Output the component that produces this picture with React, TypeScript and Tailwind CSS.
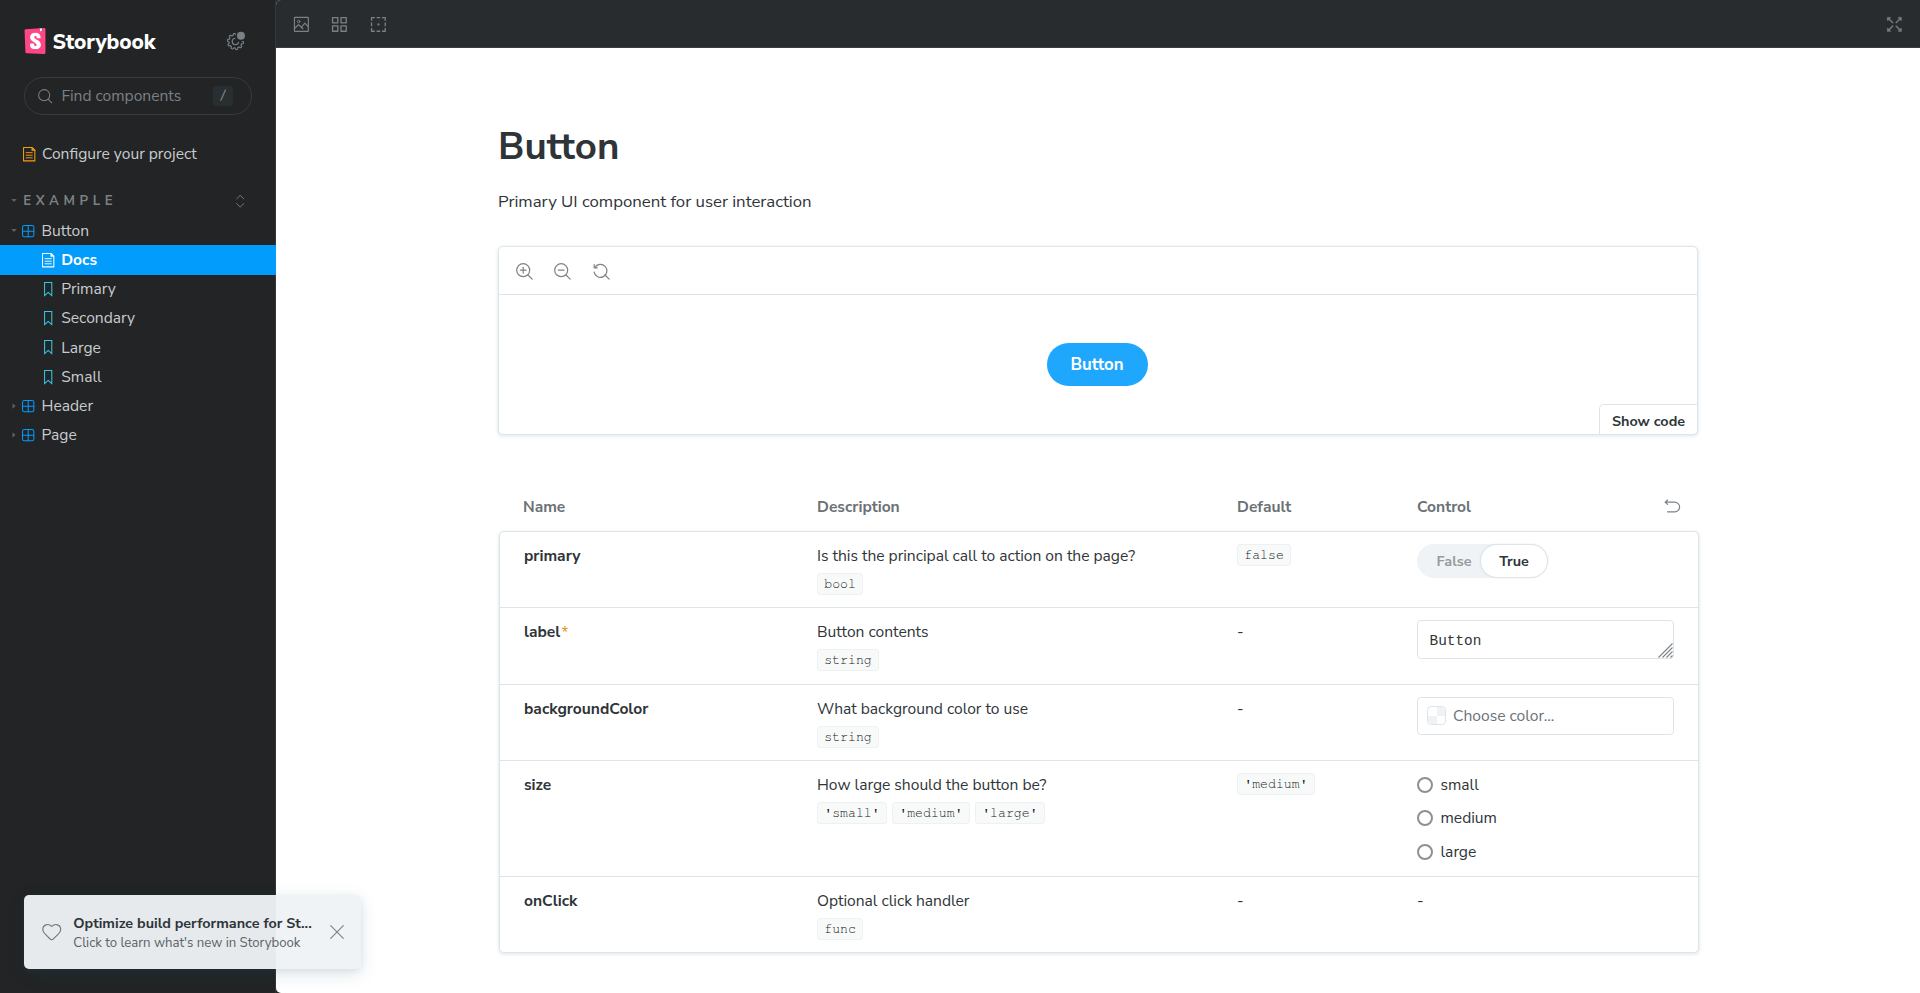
import type { ReactNode } from "react";
import { Heart } from "lucide-react";
import { SiStorybook } from "react-icons/si";

const SANS = "font-['Nunito_Sans','Lato',sans-serif]";
const CODE = "font-['FreeMono','Liberation_Mono',monospace]";

function Icon({ className = "", children }: { className?: string; children: ReactNode }) {
  return (
    <svg
      viewBox="0 0 14 14"
      fill="none"
      stroke="currentColor"
      strokeLinecap="round"
      strokeLinejoin="round"
      className={`shrink-0 overflow-visible ${className}`}
    >
      {children}
    </svg>
  );
}

const DocumentIcon = ({ className }: { className: string }) => (
  <Icon className={className}>
    <path d="M1.5 .5H10L12.5 3V13.5H1.5Z" />
    <path d="M9.5 .5V3.5H12.5Z" fill="currentColor" strokeWidth=".5" />
    <path d="M4 5.5H10M4 8H10M4 10.5H10" strokeWidth=".9" />
  </Icon>
);

const ComponentIcon = () => (
  <Icon className="size-[14.4px] text-[#029cfd]">
    <rect x="1.5" y="1.5" width="11" height="11" rx="1.8" />
    <path d="M7 1.5V12.5M1.5 7H12.5" />
  </Icon>
);

const BookmarkIcon = () => (
  <Icon className="size-[14.4px] text-[#37c9e6]">
    <path d="M3.5 .5H10.5V13.3L7 10.2L3.5 13.3Z" strokeLinejoin="miter" />
  </Icon>
);

const gear = (() => {
  const points: string[] = [];
  for (let i = 0; i <= 200; i++) {
    const a = (i / 200) * Math.PI * 2;
    const wave = Math.max(-0.6, Math.min(0.6, Math.sin(a * 10)));
    const r = 6 + wave * 1.1;
    points.push(`${(7 + r * Math.cos(a)).toFixed(2)} ${(7 + r * Math.sin(a)).toFixed(2)}`);
  }
  return `M${points.join("L")}Z`;
})();

const CogIcon = () => (
  <Icon className="size-[17px] text-[#798186]">
    <mask id="cog-badge" maskUnits="userSpaceOnUse" x="-2" y="-2" width="18" height="18">
      <rect x="-2" y="-2" width="18" height="18" fill="white" stroke="none" />
      <circle cx="11.5" cy="2.3" r="4.4" fill="black" stroke="none" />
    </mask>
    <g mask="url(#cog-badge)">
      <path d={gear} strokeWidth=".95" />
      <path d="M6.6 4.3A2.7 2.7 0 1 0 9.6 7.6" strokeWidth=".95" />
    </g>
    <circle cx="11.5" cy="2.3" r="3.3" fill="currentColor" stroke="none" />
  </Icon>
);

const PhotoIcon = () => (
  <Icon className="size-[16.8px]">
    <rect x="1.2" y="1.2" width="11.6" height="11.6" rx=".4" />
    <circle cx="4.7" cy="4.6" r="1.1" strokeWidth=".8" />
    <path d="M1.5 10.2L4.6 7.2L6.9 9.4L9.9 6L12.6 8.9M6.9 9.4L8.2 10.6" />
  </Icon>
);

const GridIcon = () => (
  <Icon className="size-[16.8px]">
    <path
      d="M1.3 1.3H5.7V5.7H1.3ZM8.3 1.3H12.7V5.7H8.3ZM1.3 8.3H5.7V12.7H1.3ZM8.3 8.3H12.7V12.7H8.3Z"
      strokeWidth="1.1"
    />
  </Icon>
);

const OutlineIcon = () => (
  <Icon className="size-[16.8px]">
    <path
      d="M1.3 4V1.3H4M5.5 1.3H8.5M10 1.3H12.7V4M12.7 5.5V8.5M12.7 10V12.7H10M8.5 12.7H5.5M4 12.7H1.3V10M1.3 8.5V5.5"
      strokeWidth="1.1"
      strokeLinecap="butt"
    />
    <circle cx="7" cy="7" r=".9" fill="currentColor" stroke="none" />
  </Icon>
);

const expandCorner =
  "M1.5 1h2a.5.5 0 010 1h-.793l3.147 3.146a.5.5 0 11-.708.708L2 2.707V3.5a.5.5 0 01-1 0v-2a.5.5 0 01.5-.5z";

const ExpandIcon = () => (
  <Icon className="size-[16.8px]">
    <g fill="currentColor" strokeWidth=".2">
      <path d={expandCorner} />
      <path d={expandCorner} transform="translate(14 0) scale(-1 1)" />
      <path d={expandCorner} transform="translate(0 14) scale(1 -1)" />
      <path d={expandCorner} transform="translate(14 14) scale(-1 -1)" />
    </g>
  </Icon>
);

function ZoomIcon({ kind }: { kind: "in" | "out" | "reset" }) {
  return (
    <Icon className="size-[16.8px]">
      {kind === "reset" ? (
        <path d="M1 1.4V4H3.6M1.5 3.9A5.4 5.4 0 1 1 .9 7.6" />
      ) : (
        <circle cx="6" cy="6" r="5.4" />
      )}
      <path d="M10 10L13.5 13.5" />
      {kind !== "reset" && <path d="M3.6 6H8.4" />}
      {kind === "in" && <path d="M6 3.6V8.4" />}
    </Icon>
  );
}

function Caret({ open }: { open: boolean }) {
  return (
    <svg viewBox="0 0 6 6" className="size-[6px] shrink-0 fill-[#5b6063]">
      <path d={open ? "M.2 1H5.8L3 4Z" : "M1.5 .2V5.8L4.5 3Z"} />
    </svg>
  );
}

function ComponentRow({ name, open = false }: { name: string; open?: boolean }) {
  return (
    <div className="flex h-[29.2px] items-center pl-[10.5px]">
      <Caret open={open} />
      <span className="ml-[4.5px] flex">
        <ComponentIcon />
      </span>
      <span className="ml-[6.2px]">{name}</span>
    </div>
  );
}

function StoryRow({ name }: { name: string }) {
  return (
    <div className="flex h-[29.2px] items-center gap-[5.8px] pl-[41px]">
      <BookmarkIcon />
      <span>{name}</span>
    </div>
  );
}

function Sidebar() {
  return (
    <aside className="flex w-[276px] shrink-0 flex-col text-[15.6px] leading-[24px] text-[#c9cccf] shadow-[inset_-1px_0_0_#343637]">
      <div className="mt-[28px] flex h-[26px] items-center pl-[24px] pr-[32px]">
        <svg viewBox="0 0 24 24" className="-ml-[2.5px] size-[26px] shrink-0">
          <rect x="5" y="3.4" width="14" height="16.5" fill="white" />
          <rect x="16.2" y=".3" width="2.6" height="4" fill="white" />
          <SiStorybook color="#ff4785" x="0" y="0" size="24" />
        </svg>
        <span className="ml-[5px] pt-px text-[21px] font-extrabold tracking-[-0.1px] text-white">Storybook</span>
        <span className="ml-auto flex">
          <CogIcon />
        </span>
      </div>
      <div className="ml-[24px] mt-[23px] flex h-[38px] w-[228px] items-center rounded-full border border-[#383a3b] pl-[13px] pr-[18.5px] text-[#7b8185]">
        <Icon className="size-[14.4px]">
          <circle cx="6" cy="6" r="5.4" />
          <path d="M10 10L13.4 13.4" />
        </Icon>
        <span className="ml-[9px]">Find components</span>
        <span className="ml-auto flex h-[19.2px] w-[19.2px] items-center justify-center rounded-[3px] bg-[#292e31] text-[13.2px] italic text-[#8d9296]">
          /
        </span>
      </div>

      <div className="mt-[24.4px] flex h-[28.8px] items-center gap-[5.6px] pl-[22px]">
        <DocumentIcon className="size-[14.4px] text-[#f99b10]" />
        <span>Configure your project</span>
      </div>

      <div className="mt-[18.6px] flex h-[28.8px] items-center pl-[10.5px] pr-[29px]">
        <Caret open />
        <span className="ml-[6.8px] text-[13.2px] font-bold tracking-[4.62px] text-[#7b8185]">EXAMPLE</span>
        <Icon className="ml-auto size-[14.4px] text-[#7b8185]">
          <path d="M3.5 4.7L7 1.3L10.5 4.7M3.5 9.3L7 12.7L10.5 9.3" strokeWidth=".9" />
        </Icon>
      </div>
      <div className="mt-[0.7px]">
        <ComponentRow name="Button" open />
        <div className="flex h-[29.2px] items-center gap-[5.8px] bg-[#029cfd] pl-[41px] font-bold text-white">
          <DocumentIcon className="size-[14.4px]" />
          <span>Docs</span>
        </div>
        <StoryRow name="Primary" />
        <StoryRow name="Secondary" />
        <StoryRow name="Large" />
        <StoryRow name="Small" />
        <ComponentRow name="Header" />
        <ComponentRow name="Page" />
      </div>
    </aside>
  );
}

function Pill({ children }: { children: ReactNode }) {
  return (
    <span
      className={`flex h-[22px] items-center rounded-[3px] border border-[#edf1f3] bg-[#f8fafa] px-[6.3px] text-[13.2px] leading-[20px] text-[#14181b] ${CODE}`}
    >
      {children}
    </span>
  );
}

type RowProps = {
  name: string;
  required?: boolean;
  description: string;
  types: string[];
  fallback?: string;
  className: string;
  children: ReactNode;
};

function ArgRow({ name, required, description, types, fallback, className, children }: RowProps) {
  return (
    <div className={`grid grid-cols-[293px_420px_180px_257px] px-[24px] pt-[12px] leading-[24px] ${className}`}>
      <div className="flex font-bold">
        {name}
        {required && (
          <span className="pt-[2px] font-['Liberation_Mono',monospace] text-[15.6px] font-normal text-[#e69117]">
            *
          </span>
        )}
      </div>
      <div>
        <div>{description}</div>
        <div className="mt-[5px] flex gap-[5px]">
          {types.map((t) => (
            <Pill key={t}>{t}</Pill>
          ))}
        </div>
      </div>
      <div className="flex items-start">{fallback ? <Pill>{fallback}</Pill> : "-"}</div>
      <div>{children}</div>
    </div>
  );
}

function Radio({ label }: { label: string }) {
  return (
    <div className="flex h-[33.6px] items-center gap-[7.5px]">
      <span className="size-[16px] rounded-full border-2 border-[#8c9195] bg-white" />
      <span>{label}</span>
    </div>
  );
}

const LINE = "border-[#dde5ea]";
const SHADOW = "shadow-[0_1px_3px_1px_rgba(38,87,115,0.11)]";

function ArgsTable() {
  return (
    <section className="mt-[60px] text-[15.6px]">
      <div className="grid grid-cols-[294px_420px_180px_257px] pl-[25px] font-bold leading-[24px] text-[#6b7175]">
        <span>Name</span>
        <span>Description</span>
        <span>Default</span>
        <span className="flex items-center justify-between">
          Control
          <Icon className="-mr-[7px] -mt-px size-[16.8px] text-[#7c8286]">
            <path d="M3 1.7L1 3.5L3 5.3M1 3.5H9A4 4 0 0 1 9 11.5H3" />
          </Icon>
        </span>
      </div>
      <div className={`ml-px mt-[12px] w-[1200px] rounded-[5px] border bg-white ${LINE} ${SHADOW}`}>
        <ArgRow
          name="primary"
          description="Is this the principal call to action on the page?"
          types={["bool"]}
          fallback="false"
          className="h-[75px]"
        >
          <div className="flex h-[34px] w-[131px] rounded-full bg-[#eff3f6] text-[14.4px] font-bold leading-[34px]">
            <span className="w-[63px] pl-[19.5px] text-[#969b9f]">False</span>
            <span
              className={`flex h-[34px] w-[68px] items-center justify-center rounded-full border bg-white shadow-[0_0_2px_rgba(38,87,115,0.12)] ${LINE}`}
            >
              True
            </span>
          </div>
        </ArgRow>
        <ArgRow
          name="label"
          required
          description="Button contents"
          types={["string"]}
          className={`h-[77px] border-t ${LINE}`}
        >
          <div
            className={`relative h-[39px] rounded-[4px] border pl-[11.5px] font-['Liberation_Mono',monospace] text-[14.4px] leading-[40px] ${LINE}`}
          >
            Button
            <svg viewBox="0 0 15 15" className="absolute bottom-0 right-0 size-[15px] stroke-[#7d8286]" fill="none">
              <path d="M.5 14.5L14.5 .5M4.5 14.5L14.5 4.5M8.5 14.5L14.5 8.5M12.5 14.5L14.5 12.5" strokeWidth="1.1" />
            </svg>
          </div>
        </ArgRow>
        <ArgRow
          name="backgroundColor"
          description="What background color to use"
          types={["string"]}
          className={`h-[76px] border-t ${LINE}`}
        >
          <div className={`flex h-[38px] items-center gap-[7px] rounded-[4px] border pl-[9px] text-[#6b7175] ${LINE}`}>
            <span className={`grid size-[19px] grid-cols-2 overflow-hidden rounded-[4px] border ${LINE}`}>
              <span />
              <span className="bg-[#eff3f6]" />
              <span className="bg-[#eff3f6]" />
              <span />
            </span>
            <span>Choose color...</span>
          </div>
        </ArgRow>
        <ArgRow
          name="size"
          description="How large should the button be?"
          types={["'small'", "'medium'", "'large'"]}
          fallback="'medium'"
          className={`h-[116px] border-t ${LINE}`}
        >
          <div className="-mt-[5px]">
            <Radio label="small" />
            <Radio label="medium" />
            <Radio label="large" />
          </div>
        </ArgRow>
        <ArgRow
          name="onClick"
          description="Optional click handler"
          types={["func"]}
          className={`h-[76px] border-t ${LINE}`}
        >
          -
        </ArgRow>
      </div>
    </section>
  );
}

function Preview() {
  return (
    <section className={`mt-[30px] h-[189px] w-[1200px] rounded-[5px] border bg-white ${LINE} ${SHADOW}`}>
      <div className={`flex h-[48px] items-center gap-[21.4px] border-b pl-[17.2px] pt-[1.5px] text-[#7c8286] ${LINE}`}>
        <ZoomIcon kind="in" />
        <ZoomIcon kind="out" />
        <ZoomIcon kind="reset" />
      </div>
      <div className="relative flex h-[139px] items-center justify-center pr-[2px]">
        <button className="h-[43px] w-[101px] rounded-full bg-[#1ea7fd] pt-px text-[16.8px] font-bold text-white">
          Button
        </button>
        <button
          className={`absolute bottom-0 right-0 h-[30px] w-[98px] rounded-tl-[5px] border-l border-t pt-[3px] text-[14.4px] font-bold leading-[20px] ${LINE}`}
        >
          Show code
        </button>
      </div>
    </section>
  );
}

function Toast() {
  return (
    <div className="absolute left-[24px] top-[895px] flex h-[74px] w-[337px] items-center rounded-[5px] bg-[rgba(238,243,246,0.96)] pl-[17px] text-[#2e3438] shadow-[0_2px_6px_rgba(38,87,115,0.1),0_5px_18px_rgba(38,87,115,0.14)]">
      <Heart size={21.5} strokeWidth={1.3} className="shrink-0 text-[#73797d]" />
      <div className="ml-[10.8px] w-[240px] whitespace-nowrap pt-[3px]">
        <div className="text-[14.4px] font-bold leading-[19px]">Optimize build performance for St...</div>
        <div className="text-[13.2px] leading-[20px] text-[#5c6266]">Click to learn what's new in Storybook</div>
      </div>
      <Icon className="ml-[15.6px] size-[16px] text-[#7c8286]">
        <path d="M1.5 1.5L12.5 12.5M12.5 1.5L1.5 12.5" />
      </Icon>
    </div>
  );
}

export default function App() {
  return (
    <div className={`relative flex h-[993px] w-[1920px] overflow-hidden bg-[#222425] text-[#2e3438] ${SANS}`}>
      <Sidebar />
      <main className="flex min-w-0 flex-1 flex-col overflow-hidden rounded-l-[5px] bg-white">
        <div className="flex h-[48px] shrink-0 items-center gap-[21.6px] border-b border-[#3b3d40] bg-[#292c2e] pl-[17px] pr-[17px] pt-[1.6px] text-[#7a8084]">
          <PhotoIcon />
          <GridIcon />
          <OutlineIcon />
          <span className="ml-auto flex">
            <ExpandIcon />
          </span>
        </div>
        <div className="pl-[222px] pt-[76.8px]">
          <h1 className="text-[38.4px] font-bold leading-[43.2px]">Button</h1>
          <p className="mt-[21.4px] text-[16.8px] leading-[26.6px]">Primary UI component for user interaction</p>
          <Preview />
          <ArgsTable />
        </div>
      </main>
      <Toast />
    </div>
  );
}
